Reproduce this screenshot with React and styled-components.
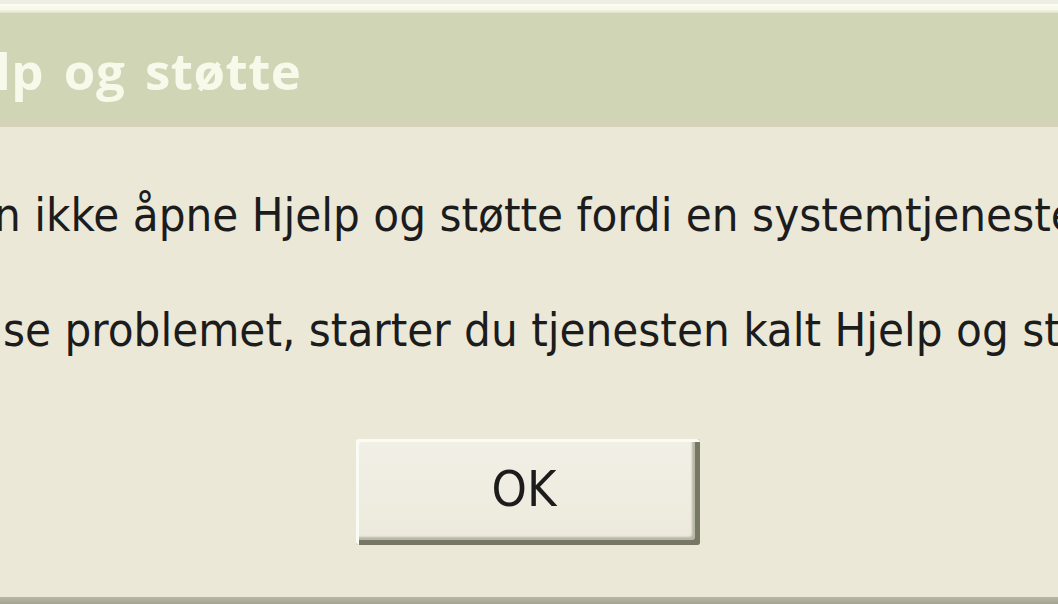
import React from 'react';
import styled, { createGlobalStyle } from 'styled-components';

const GlobalStyle = createGlobalStyle`
  html, body {
    margin: 0;
    padding: 0;
    background: #ebe8d8;
    overflow: hidden;
  }
`;

const Window = styled.div`
  width: 1058px;
  height: 604px;
  display: flex;
  flex-direction: column;
  background: #ebe8d8;
  overflow: hidden;
`;

const TopEdge = styled.div`
  height: 4px;
  background: #eeeee4;
`;

const Highlight = styled.div`
  height: 9px;
  background: linear-gradient(#fbfdf0, #f6f9e8 60%, #dfe2c8);
`;

const TitleBar = styled.div`
  height: 114px;
  display: flex;
  align-items: center;
  background: linear-gradient(#d0d5b6 0%, #d0d5b5 92%, #d6d2bc 100%);
  overflow: hidden;
`;

const Title = styled.h1`
  margin: 0 0 0 -91px;
  font-family: "Trebuchet MS", "Open Sans", "DejaVu Sans", sans-serif;
  font-weight: 700;
  font-size: 51px;
  color: #f7faea;
  white-space: nowrap;
  letter-spacing: 0.5px;
  word-spacing: 6px;
`;

const Body = styled.div`
  flex: 1;
  display: flex;
  flex-direction: column;
  padding-top: 60px;
`;

const Message = styled.p`
  margin: 0;
  height: 115px;
  font-family: Tahoma, "DejaVu Sans Condensed", "DejaVu Sans", sans-serif;
  font-size: 47px;
  color: #1c1c1c;
  white-space: nowrap;
  overflow: hidden;
  text-indent: ${p => p.$indent || 0}px;
`;

const ButtonRow = styled.div`
  display: flex;
  justify-content: center;
  margin-top: 22px;
  padding-right: 2px;
`;

const OkButton = styled.button`
  width: 344px;
  height: 106px;
  box-sizing: border-box;
  background: linear-gradient(#f2f0e6, #ece9dc);
  border: none;
  border-radius: 3px;
  box-shadow:
    inset 3px 3px 0 #fbfbf6,
    inset -5px -5px 0 #777766,
    inset -8px -8px 2px #b9b7a6;
  font-family: Tahoma, "DejaVu Sans Condensed", "DejaVu Sans", sans-serif;
  font-size: 50px;
  color: #1c1c1c;
  padding: 0 8px 6px 0;
`;

const BottomEdge = styled.div`
  height: 7px;
  background: linear-gradient(#b8b7a6, #a4a392);
`;

export default function App() {
  return (
    <>
      <GlobalStyle />
      <Window>
        <TopEdge />
        <Highlight />
        <TitleBar>
          <Title>Hjelp og støtte</Title>
        </TitleBar>
        <Body>
          <Message $indent={-6}>n ikke åpne Hjelp og støtte fordi en systemtjeneste ikke kjører.</Message>
          <Message $indent={3}>se problemet, starter du tjenesten kalt Hjelp og støtte.</Message>
          <ButtonRow>
            <OkButton>OK</OkButton>
          </ButtonRow>
        </Body>
        <BottomEdge />
      </Window>
    </>
  );
}
